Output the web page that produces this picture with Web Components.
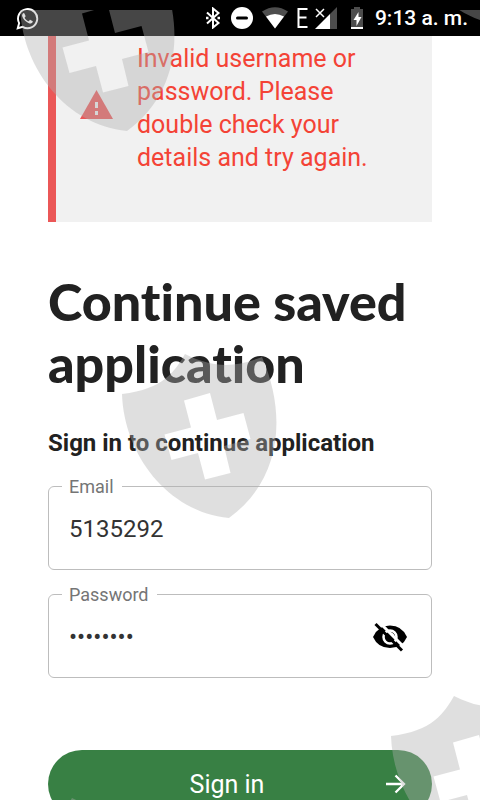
<!DOCTYPE html>
<html lang="en">
<head>
<meta charset="utf-8">
<meta name="viewport" content="width=device-width, initial-scale=1">
<title>Continue saved application</title>
<style>
body {
  margin: 0;
  font-family: Roboto, "Liberation Sans", sans-serif;
  color: #212121;
  background: #fff;
}
</style>
</head>
<body>
<sign-in-page></sign-in-page>

<template id="status-bar">
<style>
:host {
  display: flex;
  flex: none;
  align-items: center;
  justify-content: space-between;
  height: 36px;
  padding: 0 12px 0 16px;
  background: #000;
  color: #fff;
}

svg {
  display: block;
}

.icons {
  display: flex;
  align-items: center;
  gap: 8px;
}

time {
  margin-left: 2px;
  font-size: 21px;
  font-weight: 500;
  line-height: 36px;
}

.network {
  display: flex;
  align-items: center;
  gap: 7px;
}
</style>
<svg width="23" height="23" viewBox="0 0 24 24" role="img" aria-label="Message">
  <path d="M1.8 22.2l1.5-5.4A10 10 0 1 1 7 20.7z" fill="none" stroke="#fff" stroke-width="2"/>
  <path d="M8.6 6.5c-.4-.4-1-.2-1.4.3-.8.9-1 2-.6 3.2 1 3.1 4.3 6.3 7.6 7.2 1.3.3 3-.6 3.3-1.8.1-.5 0-.7-.4-.9l-2-1c-.4-.2-.7-.1-.9.2l-.8 1c-.2.2-.5.3-.8.1-1.5-.7-2.7-1.8-3.5-3.3-.2-.3 0-.5.2-.7l.6-.8c.2-.3.1-.5 0-.8z" fill="#fff"/>
</svg>
<div class="icons">
  <svg width="18" height="22" viewBox="0 0 18 22" role="img" aria-label="Bluetooth">
    <path d="M2 5.5L13.5 16 8 20.5V1.5L13.5 6 2 16.5" fill="none" stroke="#fff" stroke-width="2"/>
    <path d="M1 9.8h2.5v2.4H1zM12.5 9.8H15v2.4h-2.5z" fill="#fff"/>
  </svg>
  <svg width="22" height="22" viewBox="0 0 22 22" role="img" aria-label="Do not disturb">
    <circle cx="11" cy="11" r="11" fill="#fff"/>
    <path d="M6.5 11h9" stroke="#000" stroke-width="3" stroke-linecap="round"/>
  </svg>
  <svg width="28" height="22" viewBox="0 0 28 22" role="img" aria-label="Wi-Fi">
    <path d="M14 21.500L1 4.500Q14-4 27 4.500z" fill="#4d4d4d"/>
    <path d="M14 21.500L5 9.500Q14 4.500 23 9.500z" fill="#fff"/>
  </svg>
  <div class="network">
    <svg width="11" height="20" viewBox="0 0 11 20" role="img" aria-label="EDGE">
      <path d="M10.500 1H1.500V19H10.500M1.500 9.500H9.500" fill="none" stroke="#fff" stroke-width="2"/>
    </svg>
    <svg width="22" height="22" viewBox="0 0 22 22" role="img" aria-label="No signal">
      <path d="M0 22L15 7V22z" fill="#fff"/>
      <path d="M15 7L22 0V22H15z" fill="#4d4d4d"/>
      <path d="M1 2L9 10M9 2L1 10" stroke="#fff" stroke-width="1.500"/>
    </svg>
  </div>
  <svg width="20" height="22" viewBox="0 0 20 22" role="img" aria-label="Battery charging">
    <path d="M9 0h6v2h3v20H6V2h3z" fill="#4d4d4d"/>
    <path d="M6 20h12v2H6z" fill="#fff"/>
    <path d="M13.500 5L8.500 13h3v6l5-9h-3z" fill="#fff"/>
  </svg>
  <time datetime="09:13">9:13 a. m.</time>
</div>
</template>

<template id="alert-banner">
<style>
:host {
  display: grid;
  grid-template-columns: 33px 1fr;
  column-gap: 24px;
  align-items: center;
  padding: 6px 48px 48px 24px;
  border-left: 8px solid #eb5757;
  background: #f1f1f1;
  color: #f44336;
  font-size: 25px;
  line-height: 33px;
}

svg {
  display: block;
  margin-bottom: 8px;
}
</style>
<svg width="33" height="29" viewBox="0 0 33 29" aria-hidden="true">
  <path d="M16.500 0L33 29H0z" fill="#eb5757"/>
  <path d="M15 12h3v6h-3zM15 21h3v4h-3z" fill="#f1f1f1"/>
</svg>
<div role="alert"><slot></slot></div>
</template>

<template id="outlined-field">
<style>
:host {
  display: block;
}

fieldset {
  display: flex;
  align-items: center;
  min-width: 0;
  height: 93px;
  box-sizing: border-box;
  margin: 0;
  padding: 0 20px 8px;
  border: 1px solid #bdbdbd;
  border-radius: 6px;
}

legend {
  margin-left: -7px;
  padding: 0 8px 0 7px;
  color: #757575;
  font-size: 18px;
  line-height: 19px;
}

input {
  flex: 1;
  min-width: 0;
  padding: 0;
  border: 0;
  outline: 0;
  background: none;
  color: #333;
  font: inherit;
  font-size: 24px;
  line-height: 32px;
}
</style>
<fieldset>
  <legend><label for="input"></label></legend>
  <input id="input">
  <slot></slot>
</fieldset>
</template>

<template id="reveal-button">
<style>
:host {
  display: block;
}

button {
  display: block;
  padding: 0 4px;
  border: 0;
  background: none;
  cursor: pointer;
}

svg {
  display: block;
}
</style>
<button type="button" aria-label="Show password">
  <svg width="34" height="30" viewBox="0 0 34 30" aria-hidden="true">
    <path d="M0 15Q5 3.500 17 3.500T34 15Q29 26 17 26T0 15z"/>
    <circle cx="17" cy="15" r="6.500" fill="none" stroke="#fff" stroke-width="2.500"/>
    <path d="M18 10.500a4.500 4.500 0 0 1 3.500 4z" fill="#fff"/>
    <path d="M5-1L34 28" stroke="#fff" stroke-width="3"/>
    <path d="M2.500 2L29 28.500" stroke="#000" stroke-width="3"/>
  </svg>
</button>
</template>

<template id="pill-button">
<style>
:host {
  display: block;
}

button {
  display: grid;
  grid-template-columns: 1fr auto 1fr;
  align-items: center;
  width: 100%;
  height: 68px;
  padding: 0 26px 0 0;
  border: 0;
  border-radius: 34px;
  background: #388044;
  color: #fff;
  font: inherit;
  font-size: 25px;
  cursor: pointer;
}

span {
  grid-column: 2;
}

svg {
  justify-self: end;
}
</style>
<button type="submit">
  <span><slot></slot></span>
  <svg width="20" height="20" viewBox="0 0 20 20" aria-hidden="true">
    <path d="M0 10H18M9.500 1.500L18 10 9.500 18.500" fill="none" stroke="#fff" stroke-width="2.300"/>
  </svg>
</button>
</template>

<template id="shield-overlay">
<style>
:host {
  position: fixed;
  inset: 10px 0 0;
  pointer-events: none;
}

svg {
  display: block;
  width: 100%;
  height: 100%;
}
</style>
<svg aria-hidden="true">
  <defs>
    <path id="shield" fill="#b0b0b0" fill-opacity="0.4" fill-rule="evenodd" d="M63 0C53 17 42 35 0 40C2 101 46 158 107 164C158 127 166 63 140 3C114 13 93 15 63 0zM88 39L95 66 121.500 59 128.500 85 102 92 108.500 119 83 125.500 76 99 49.500 106 42.500 80.500 69 73.500 62 46.500z"/>
  </defs>
</svg>
</template>

<template id="sign-in-page">
<style>
:host {
  display: flex;
  flex-direction: column;
  height: 100vh;
}

main {
  flex: 1;
  min-height: 0;
  padding: 0 48px;
  overflow-y: auto;
  scrollbar-width: none;
}

h1 {
  margin: 48px 0 0;
  font-family: Lato, "Open Sans", sans-serif;
  font-size: 52px;
  font-weight: 900;
  font-variant-ligatures: none;
  line-height: 62px;
}

h2 {
  margin: 33px 0 18px;
  font-size: 24px;
  font-weight: 700;
  line-height: 32px;
}

form {
  display: flex;
  flex-direction: column;
  gap: 15px;
}

pill-button {
  margin: 57px 0 24px;
}
</style>
<status-bar></status-bar>
<main>
  <alert-banner>Invalid username or password. Please double check your details and try again.</alert-banner>
  <h1>Continue saved application</h1>
  <h2>Sign in to continue application</h2>
  <form>
    <outlined-field label="Email" type="text" value="5135292"></outlined-field>
    <outlined-field label="Password" type="password" value="51352920"><reveal-button></reveal-button></outlined-field>
    <pill-button>Sign in</pill-button>
  </form>
</main>
<shield-overlay></shield-overlay>
</template>

<script>
/**
 * Base class that clones the template named after the element.
 */
class TemplateElement extends HTMLElement {
  constructor() {
    super();

    const template = document.getElementById(this.localName);
    this.attachShadow({mode: 'open'});
    this.shadowRoot.append(template.content.cloneNode(true));
  }
}

class StatusBar extends TemplateElement {}

class AlertBanner extends TemplateElement {}

class PillButton extends TemplateElement {}

/**
 * Text box with its label set into the outline.
 */
class OutlinedField extends TemplateElement {
  connectedCallback() {
    const input = this.shadowRoot.querySelector('input');
    this.shadowRoot.querySelector('label').textContent = this.getAttribute('label');
    input.type = this.getAttribute('type');
    input.value = this.getAttribute('value');
    this.addEventListener('x-reveal', this.handleReveal);
  }

  handleReveal = () => {
    const input = this.shadowRoot.querySelector('input');
    input.type = input.type === 'password' ? 'text' : 'password';
  }
}

/**
 * Eye button that asks its field to show or hide the password.
 */
class RevealButton extends TemplateElement {
  connectedCallback() {
    this.shadowRoot.querySelector('button').addEventListener('click', () => {
      this.dispatchEvent(new CustomEvent('x-reveal', {bubbles: true}));
    });
  }
}

/**
 * Translucent shields scattered over the whole screen.
 */
class ShieldOverlay extends TemplateElement {
  connectedCallback() {
    const svg = this.shadowRoot.querySelector('svg');
    const places = [[20, -43], [122, 344], [391, 686], [399, -148], [9, 788]];

    places.forEach(([x, y]) => {
      const use = document.createElementNS('http://www.w3.org/2000/svg', 'use');
      use.setAttribute('href', '#shield');
      use.setAttribute('x', x);
      use.setAttribute('y', y);
      svg.append(use);
    });
  }
}

class SignInPage extends TemplateElement {}

window.customElements.define('status-bar', StatusBar);
window.customElements.define('alert-banner', AlertBanner);
window.customElements.define('pill-button', PillButton);
window.customElements.define('outlined-field', OutlinedField);
window.customElements.define('reveal-button', RevealButton);
window.customElements.define('shield-overlay', ShieldOverlay);
window.customElements.define('sign-in-page', SignInPage);
</script>
</body>
</html>
